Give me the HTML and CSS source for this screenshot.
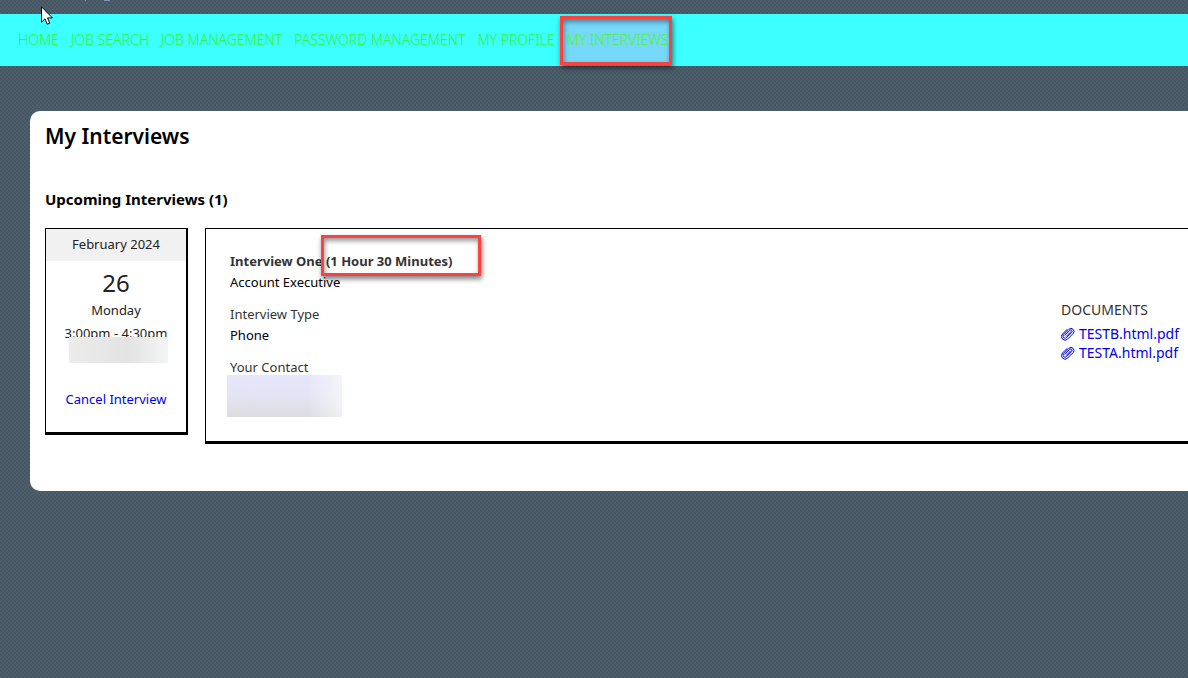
FILE: index.html
```html
<!DOCTYPE html>
<html lang="en">
<head>
    <meta charset="UTF-8">
    <meta name="viewport" content="width=device-width, initial-scale=1.0">
    <title>My Interviews</title>
    <link rel="stylesheet" href="styles.css">
</head>
<body>
    <nav class="menu">
        <a href="#">HOME</a>
        <a href="#">JOB SEARCH</a>
        <a href="#">JOB MANAGEMENT</a>
        <a href="#">PASSWORD MANAGEMENT</a>
        <a href="#">MY PROFILE</a>
        <a href="#" class="active">MY INTERVIEWS<span class="marker"></span></a>
    </nav>

    <main class="panel">
        <h1>My Interviews</h1>
        <h2>Upcoming Interviews (1)</h2>

        <div class="interview">
            <!-- Date -->
            <section class="date-card">
                <div class="month">February 2024</div>
                <div class="day">26</div>
                <div class="line">Monday</div>
                <div class="line time">3:00pm - 4:30pm<span class="hidden-zone"></span></div>
                <a href="#" class="cancel">Cancel Interview</a>
            </section>

            <!-- Details -->
            <section class="details">
                <div class="info">
                    <h3>Interview One <span class="duration">(1 Hour 30 Minutes)<span class="marker"></span></span></h3>
                    <p>Account Executive</p>
                    <h4>Interview Type</h4>
                    <p>Phone</p>
                    <h4>Your Contact</h4>
                    <div class="hidden-contact"></div>
                </div>
                <div class="documents">
                    <h4>DOCUMENTS</h4>
                    <a href="#"><svg class="clip" viewBox="0 0 14 14"><path d="M5 9.6 10.2 4.4M3.6 8.5 8.7 3.4a1.3 1.3 0 0 1 2 2L5.5 10.6a2 2 0 0 1-2.9-2.9L7.8 2.4a2.9 2.9 0 0 1 4.4 4.1L6.6 12.1a3.6 3.6 0 0 1-5.1-5.1L6.4 2.1"/></svg>TESTB.html.pdf</a>
                    <a href="#"><svg class="clip" viewBox="0 0 14 14"><path d="M5 9.6 10.2 4.4M3.6 8.5 8.7 3.4a1.3 1.3 0 0 1 2 2L5.5 10.6a2 2 0 0 1-2.9-2.9L7.8 2.4a2.9 2.9 0 0 1 4.4 4.1L6.6 12.1a3.6 3.6 0 0 1-5.1-5.1L6.4 2.1"/></svg>TESTA.html.pdf</a>
                </div>
            </section>
        </div>
    </main>

    <svg class="pointer" viewBox="0 0 12 19"><path d="M.5.8v15.4l3.4-3.3 2.4 5.3 2.5-1.1-2.3-5.2h4.9z"/></svg>
</body>
</html>
```
FILE: styles.css
```css
* {
    box-sizing: border-box;
}
body {
    margin: 0;
    padding-top: 14px;
    overflow-x: hidden;
    font-family: "Noto Sans", sans-serif;
    font-size: 13px;
    line-height: 20px;
    color: #000;
    background-color: #4a5b68;
    background-image:
        linear-gradient(#8094b8, #8094b8),
        linear-gradient(#8094a8, #8094a8),
        conic-gradient(#465763 25%, #4d5f6b 0 50%, #465763 0 75%, #4d5f6b 0);
    background-position: 104px 0, 85px 0, 0 0;
    background-repeat: no-repeat, no-repeat, repeat;
    background-size: 6px 1px, 1px 1px, 4px 4px;
}
h1, h2, h3, h4, p {
    margin: 0;
}
a {
    color: #0000ee;
    text-decoration: none;
}

/* Menu bar */
.menu {
    display: flex;
    gap: 12px;
    height: 52px;
    padding-left: 18px;
    background-color: #3cffff;
    font-size: 14px;
    line-height: 52px;
    white-space: nowrap;
}
.menu a {
    position: relative;
    color: #33f433;
    font-weight: 300;
}
.menu .active {
    z-index: 1;
    color: #4df52a;
}
.marker {
    position: absolute;
    border: 3px solid #fb4141;
    box-shadow: 1px 3px 5px rgba(0, 0, 0, 0.5), inset 1px 3px 5px rgba(0, 0, 0, 0.4);
}
.menu .marker {
    inset: 2px -3px 1px -7px;
    z-index: -1;
    background-color: #76d8f8;
}

/* Interviews panel */
.panel {
    margin: 45px 0 0 30px;
    padding: 11px 0 47px 15px;
    border-radius: 10px 0 0 10px;
    background-color: #fff;
}
h1 {
    font-size: 21px;
    line-height: 28px;
    font-weight: 600;
}
h2 {
    margin: 37px 0 17px;
    font-size: 15px;
    line-height: 24px;
    font-weight: 700;
}
.interview {
    display: flex;
    align-items: flex-start;
    gap: 17px;
}
.date-card {
    width: 143px;
    height: 207px;
    border: solid #000;
    border-width: 1px 2px 3px 1px;
    text-align: center;
    color: #222;
}
.month {
    height: 32px;
    line-height: 30px;
    background-color: #f1f1f1;
}
.day {
    padding-top: 6px;
    font-size: 24px;
    line-height: 32px;
}
.line {
    position: relative;
    line-height: 23px;
}
.hidden-zone {
    position: absolute;
    top: 15px;
    left: 23px;
    width: 99px;
    height: 26px;
    background: linear-gradient(90deg, #ececeb, #e3e3e3 60%, #f3f5f5);
}
.cancel {
    display: block;
    margin-top: 44px;
}

/* Details */
.details {
    display: flex;
    flex: 1;
    justify-content: space-between;
    padding: 21px 9px 24px 24px;
    border: solid #000;
    border-width: 1px 0 3px 1px;
}
h3 {
    font-size: 13px;
    line-height: 22px;
    font-weight: 700;
    color: #333;
}
.duration {
    position: relative;
}
.duration .marker {
    inset: -17px -28px -6px -5px;
}
h4 {
    margin-top: 12px;
    font-size: 13px;
    line-height: 21px;
    font-weight: 400;
    color: #333;
}
.hidden-contact {
    width: 115px;
    height: 42px;
    margin: -3px 0 0 -3px;
    background: linear-gradient(90deg, transparent 70%, rgba(255, 255, 255, 0.6)), linear-gradient(#e6e6fb, #e4e4f4 50%, #dcdcdf);
}
.documents {
    padding-top: 37px;
    font-size: 14px;
}
.documents h4 {
    margin-bottom: 4px;
    font-size: 14px;
}
.documents a {
    display: flex;
    align-items: center;
    gap: 4px;
    line-height: 19px;
}
.clip {
    width: 14px;
    height: 14px;
    fill: none;
    stroke: #0000ee;
}
.pointer {
    position: absolute;
    top: 6px;
    left: 41px;
    width: 12px;
    height: 19px;
    fill: #fff;
    stroke: #000;
    z-index: 2;
}
```
